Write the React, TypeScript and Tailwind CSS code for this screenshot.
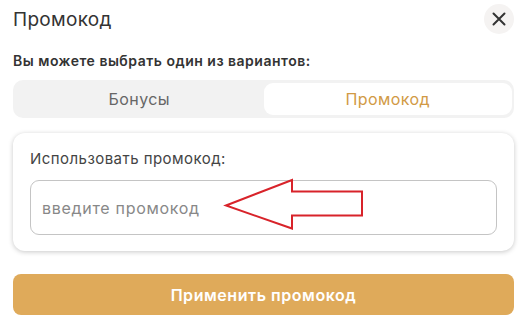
import React from "react";

export default function App() {
  return (
    <div className="w-[530px] h-[330px] bg-white overflow-hidden" style={{ fontFamily: "Inter, 'Noto Sans', sans-serif" }}>
      <div className="pl-[13px] pr-[16px]">
        <div className="flex items-center justify-between h-[30px] mt-[4px]">
          <div className="text-[19px] text-[#333] leading-none tracking-[0.3px]">Промокод</div>
          <button className="w-[30px] h-[30px] rounded-full bg-[#f5f3f2] flex items-center justify-center">
            <svg width="16" height="16" viewBox="0 0 16 16" fill="none">
              <path d="M2.5 2.5 L13.5 13.5 M13.5 2.5 L2.5 13.5" stroke="#333" strokeWidth="2" strokeLinecap="round" />
            </svg>
          </button>
        </div>
        <div className="mt-[17px] text-[14px] font-semibold text-[#333] leading-[20px] tracking-[0.5px]">Вы можете выбрать один из вариантов:</div>
        <div className="mt-[9px] h-[38px] rounded-[10px] bg-[#f2f2f2] px-[2px] py-[3px] grid grid-cols-2">
          <div className="flex items-center justify-center text-[16px] text-[#666] tracking-[0.4px]">Бонусы</div>
          <div className="flex items-center justify-center text-[16px] text-[#d19a45] bg-white rounded-[9px] tracking-[0.4px]">Промокод</div>
        </div>
        <div className="mt-[15px] rounded-[12px] bg-white shadow-[0_1px_5px_rgba(0,0,0,0.22)] pl-[17px] pr-[17px] pt-[16px] pb-[16px]">
          <div className="text-[15px] text-[#444] leading-[20px] tracking-[0.45px]">Использовать промокод:</div>
          <div className="relative mt-[11px]">
            <div className="h-[55px] rounded-[9px] border border-[#c4c4c4] flex items-center pl-[11px] text-[16px] text-[#888] tracking-[0.7px]">введите промокод</div>
            <svg className="absolute left-[190px] top-[-4px]" width="180" height="60" viewBox="0 0 180 60" fill="none">
              <polygon points="6,29.5 72,4 72,15.5 142,15.5 142,39.5 72,39.5 72,52.5" stroke="#d8232a" strokeWidth="2" strokeLinejoin="miter" fill="none" />
            </svg>
          </div>
        </div>
        <button className="mt-[23px] w-full h-[41px] rounded-[8px] bg-[#dfaa5a] text-white text-[16px] font-semibold flex items-center justify-center tracking-[0.55px]">Применить промокод</button>
      </div>
    </div>
  );
}
